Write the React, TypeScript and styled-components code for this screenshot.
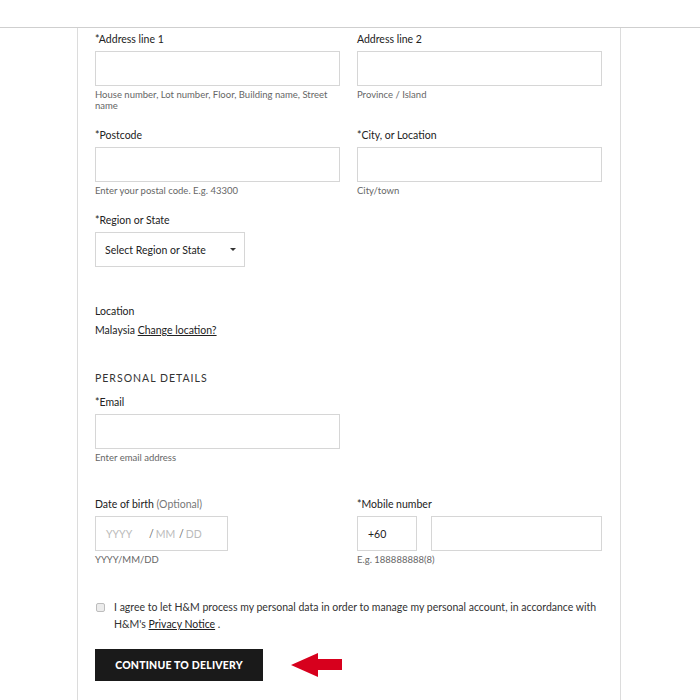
import React from "react";
import styled, { createGlobalStyle } from "styled-components";

const Global = createGlobalStyle`
  html, body { margin: 0; padding: 0; background: #fff; }
  body { font-family: Lato, "Open Sans", Arial, sans-serif; color: #222; }
  * { box-sizing: border-box; }
`;

const TopBar = styled.div`
  height: 28px;
  border-bottom: 1px solid #cfcfcf;
`;

const Panel = styled.div`
  margin-left: 77px;
  width: 544px;
  min-height: 672px;
  border-left: 1px solid #dcdcdc;
  border-right: 1px solid #dcdcdc;
  padding: 4px 0 0 17px;
`;

const Grid = styled.div`
  display: grid;
  grid-template-columns: 245px 245px;
  column-gap: 17px;
`;

const Field = styled.div<{ $mb?: number }>`
  display: flex;
  flex-direction: column;
  margin-bottom: ${(p) => p.$mb ?? 17}px;
`;

const Label = styled.label`
  font-size: 10.5px;
  line-height: 14px;
  color: #222;
  margin-bottom: 5px;
`;

const Muted = styled.span`
  color: #777;
`;

const Input = styled.div<{ $w?: number }>`
  height: 35px;
  width: ${(p) => (p.$w ? `${p.$w}px` : "100%")};
  border: 1px solid #d6d6d6;
  background: #fff;
`;

const Hint = styled.div`
  font-size: 9.5px;
  line-height: 11px;
  color: #666;
  margin-top: 3px;
`;

const Select = styled.div`
  width: 150px;
  height: 35px;
  border: 1px solid #d6d6d6;
  display: flex;
  align-items: center;
  justify-content: space-between;
  padding: 0 8px 0 9px;
  font-size: 10.5px;
  color: #222;
`;

const Caret = styled.span`
  width: 0;
  height: 0;
  border-left: 3px solid transparent;
  border-right: 3px solid transparent;
  border-top: 3px solid #333;
`;

const Location = styled.div`
  margin-top: 37px;
  font-size: 10.5px;
  line-height: 14px;
  display: flex;
  flex-direction: column;
  gap: 5px;
`;

const Link = styled.a`
  color: #222;
  text-decoration: underline;
`;

const Heading = styled.h2`
  margin: 34px 0 10px;
  font-size: 10.5px;
  line-height: 14px;
  font-weight: 400;
  letter-spacing: 1px;
  text-transform: uppercase;
  color: #333;
`;

const DateBox = styled.div`
  width: 133px;
  height: 35px;
  border: 1px solid #d6d6d6;
  display: flex;
  align-items: center;
  padding-left: 10px;
  font-size: 10.5px;
  color: #bbb;
`;

const DatePart = styled.span<{ $w: number }>`
  width: ${(p) => p.$w}px;
`;

const Slash = styled.span`
  color: #666;
  margin-right: 2px;
`;

const PhoneRow = styled.div`
  display: flex;
  gap: 14px;
`;

const Prefix = styled.div`
  flex: none;
  width: 60px;
  height: 35px;
  border: 1px solid #d6d6d6;
  display: flex;
  align-items: center;
  padding-left: 10px;
  font-size: 10.5px;
  color: #222;
`;

const Consent = styled.div`
  display: flex;
  align-items: flex-start;
  gap: 9px;
  margin-top: 34px;
  font-size: 10.5px;
  line-height: 17px;
  color: #333;
  padding-right: 20px;
`;

const Check = styled.span`
  flex: none;
  width: 9px;
  height: 9px;
  margin: 4px 0 0 1px;
  border: 1px solid #bdbdbd;
  border-radius: 2px;
  background: #ececec;
`;

const ActionRow = styled.div`
  display: flex;
  align-items: center;
  gap: 28px;
  margin-top: 16px;
`;

const Button = styled.button`
  width: 168px;
  height: 32px;
  background: #1a1a1a;
  color: #fff;
  border: none;
  font-family: Lato, Arial, sans-serif;
  font-weight: 900;
  font-size: 10.5px;
  letter-spacing: 0.2px;
  text-transform: uppercase;
`;

export default function App() {
  return (
    <>
      <Global />
      <TopBar />
      <Panel>
        <Grid>
          <Field>
            <Label>*Address line 1</Label>
            <Input />
            <Hint>House number, Lot number, Floor, Building name, Street name</Hint>
          </Field>
          <Field>
            <Label>Address line 2</Label>
            <Input />
            <Hint>Province / Island</Hint>
          </Field>
          <Field>
            <Label>*Postcode</Label>
            <Input />
            <Hint>Enter your postal code. E.g. 43300</Hint>
          </Field>
          <Field>
            <Label>*City, or Location</Label>
            <Input />
            <Hint>City/town</Hint>
          </Field>
        </Grid>
        <Field $mb={0}>
          <Label>*Region or State</Label>
          <Select>
            <span>Select Region or State</span>
            <Caret />
          </Select>
        </Field>
        <Location>
          <span>Location</span>
          <span>
            Malaysia <Link>Change location?</Link>
          </span>
        </Location>
        <Heading>Personal details</Heading>
        <Grid>
          <Field $mb={34}>
            <Label>*Email</Label>
            <Input />
            <Hint>Enter email address</Hint>
          </Field>
          <div />
          <Field $mb={0}>
            <Label>
              Date of birth <Muted>(Optional)</Muted>
            </Label>
            <DateBox>
              <DatePart $w={43}>YYYY</DatePart>
              <DatePart $w={30}>
                <Slash>/</Slash>MM
              </DatePart>
              <DatePart $w={30}>
                <Slash>/</Slash>DD
              </DatePart>
            </DateBox>
            <Hint>YYYY/MM/DD</Hint>
          </Field>
          <Field $mb={0}>
            <Label>*Mobile number</Label>
            <PhoneRow>
              <Prefix>+60</Prefix>
              <Input />
            </PhoneRow>
            <Hint>E.g. 188888888(8)</Hint>
          </Field>
        </Grid>
        <Consent>
          <Check />
          <span>
            I agree to let H&amp;M process my personal data in order to manage my personal account, in accordance with H&amp;M's{" "}
            <Link>Privacy Notice</Link> .
          </span>
        </Consent>
        <ActionRow>
          <Button>Continue to delivery</Button>
          <svg width="52" height="24" viewBox="0 0 52 24">
            <polygon points="0,12 27,0 27,6 51,6 51,17 27,17 27,24" fill="#d7001d" />
          </svg>
        </ActionRow>
      </Panel>
    </>
  );
}
